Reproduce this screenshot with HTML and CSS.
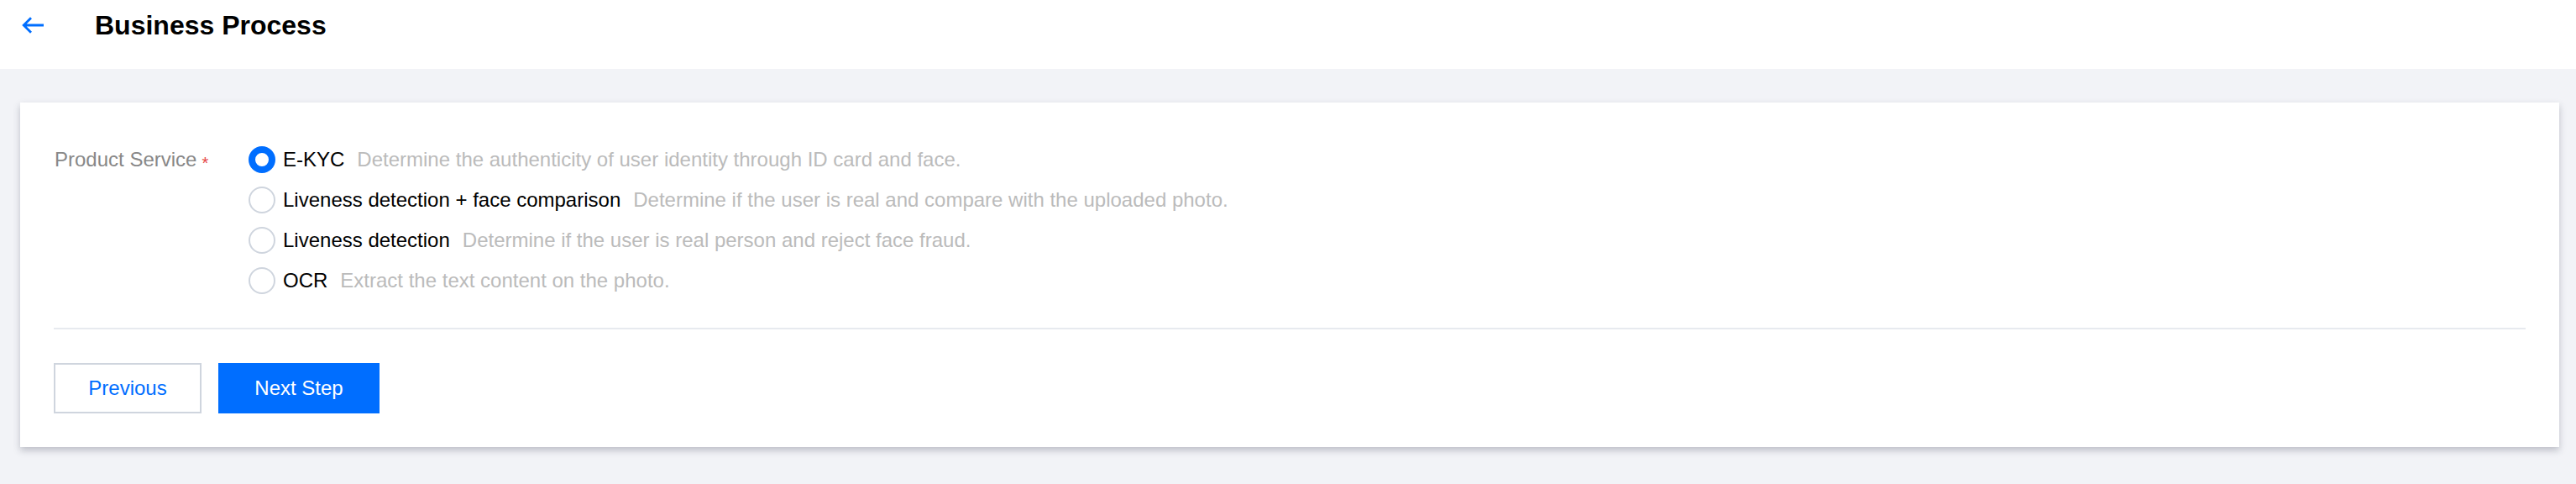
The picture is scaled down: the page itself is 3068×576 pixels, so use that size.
FILE: index.html
```html
<!DOCTYPE html>
<html lang="en">
<head>
<meta charset="utf-8">
<title>Business Process</title>
<link rel="stylesheet" href="styles.css">
</head>
<body>
<header class="topbar">
  <a class="back" href="#" aria-label="Back">
    <svg width="26" height="20" viewBox="0 0 26 20" aria-hidden="true">
      <path d="M26 10H2.5M11 1.2L2.2 10l8.8 8.8" stroke="#006eff" stroke-width="2.8" fill="none"/>
    </svg>
  </a>
  <h1 class="title">Business Process</h1>
</header>
<main class="page">
  <section class="card">
    <div class="form-row">
      <div class="form-label">Product Service<span class="req">*</span></div>
      <div class="radio-group">
        <label class="radio is-checked"><span class="dot"></span><span class="name">E-KYC</span><span class="desc">Determine the authenticity of user identity through ID card and face.</span></label>
        <label class="radio"><span class="dot"></span><span class="name">Liveness detection + face comparison</span><span class="desc">Determine if the user is real and compare with the uploaded photo.</span></label>
        <label class="radio"><span class="dot"></span><span class="name">Liveness detection</span><span class="desc">Determine if the user is real person and reject face fraud.</span></label>
        <label class="radio"><span class="dot"></span><span class="name">OCR</span><span class="desc">Extract the text content on the photo.</span></label>
      </div>
    </div>
    <div class="divider"></div>
    <div class="actions">
      <button class="btn btn-default" type="button">Previous</button>
      <button class="btn btn-primary" type="button">Next Step</button>
    </div>
  </section>
</main>
</body>
</html>
```

FILE: styles.css
```css
* { box-sizing: border-box; }

html, body {
  margin: 0;
  padding: 0;
}

body {
  background: #f2f3f7;
  font-family: "Liberation Sans", Arial, "Helvetica Neue", sans-serif;
  color: #000;
  width: 3068px;
  height: 576px;
  overflow: hidden;
}

.topbar {
  background: #fff;
  height: 82px;
  padding: 0 0 22px 26px;
  display: flex;
  align-items: center;
}

.back {
  display: flex;
  width: 26px;
  height: 20px;
}

.title {
  margin: 0 0 0 61px;
  font-size: 32px;
  font-weight: bold;
  line-height: 40px;
  color: #000;
}

.page {
  padding: 40px 20px 0 24px;
}

.card {
  background: #fff;
  box-shadow: 0 4px 8px rgba(54, 58, 80, 0.28);
  padding: 52px 40px 40px;
  height: 410px;
}

.form-row {
  display: flex;
  align-items: flex-start;
}

.form-label {
  width: 232px;
  flex: none;
  font-size: 24px;
  line-height: 32px;
  color: #888;
  padding-left: 1px;
}

.req {
  color: #e54545;
  font-size: 20px;
  margin-left: 6px;
  vertical-align: -3px;
}

.radio-group {
  display: flex;
  flex-direction: column;
  gap: 16px;
}

.radio {
  display: flex;
  align-items: center;
  height: 32px;
  font-size: 24px;
  line-height: 32px;
}

.dot {
  width: 32px;
  height: 32px;
  border-radius: 50%;
  border: 2px solid #cfd5de;
  background: #fff;
  flex: none;
}

.is-checked .dot {
  border: 8px solid #006eff;
}

.name {
  margin-left: 9px;
  color: #000;
}

.desc {
  margin-left: 15px;
  color: #bbb;
}

.divider {
  height: 2px;
  background: #e7eaef;
  margin: 40px 0;
}

.actions {
  display: flex;
  gap: 20px;
}

.btn {
  height: 60px;
  font-family: inherit;
  font-size: 24px;
  padding: 0;
  cursor: pointer;
}

.btn-default {
  width: 176px;
  background: #fff;
  border: 2px solid #cfd5de;
  color: #006eff;
}

.btn-primary {
  width: 192px;
  background: #006eff;
  border: none;
  color: #fff;
}
```
